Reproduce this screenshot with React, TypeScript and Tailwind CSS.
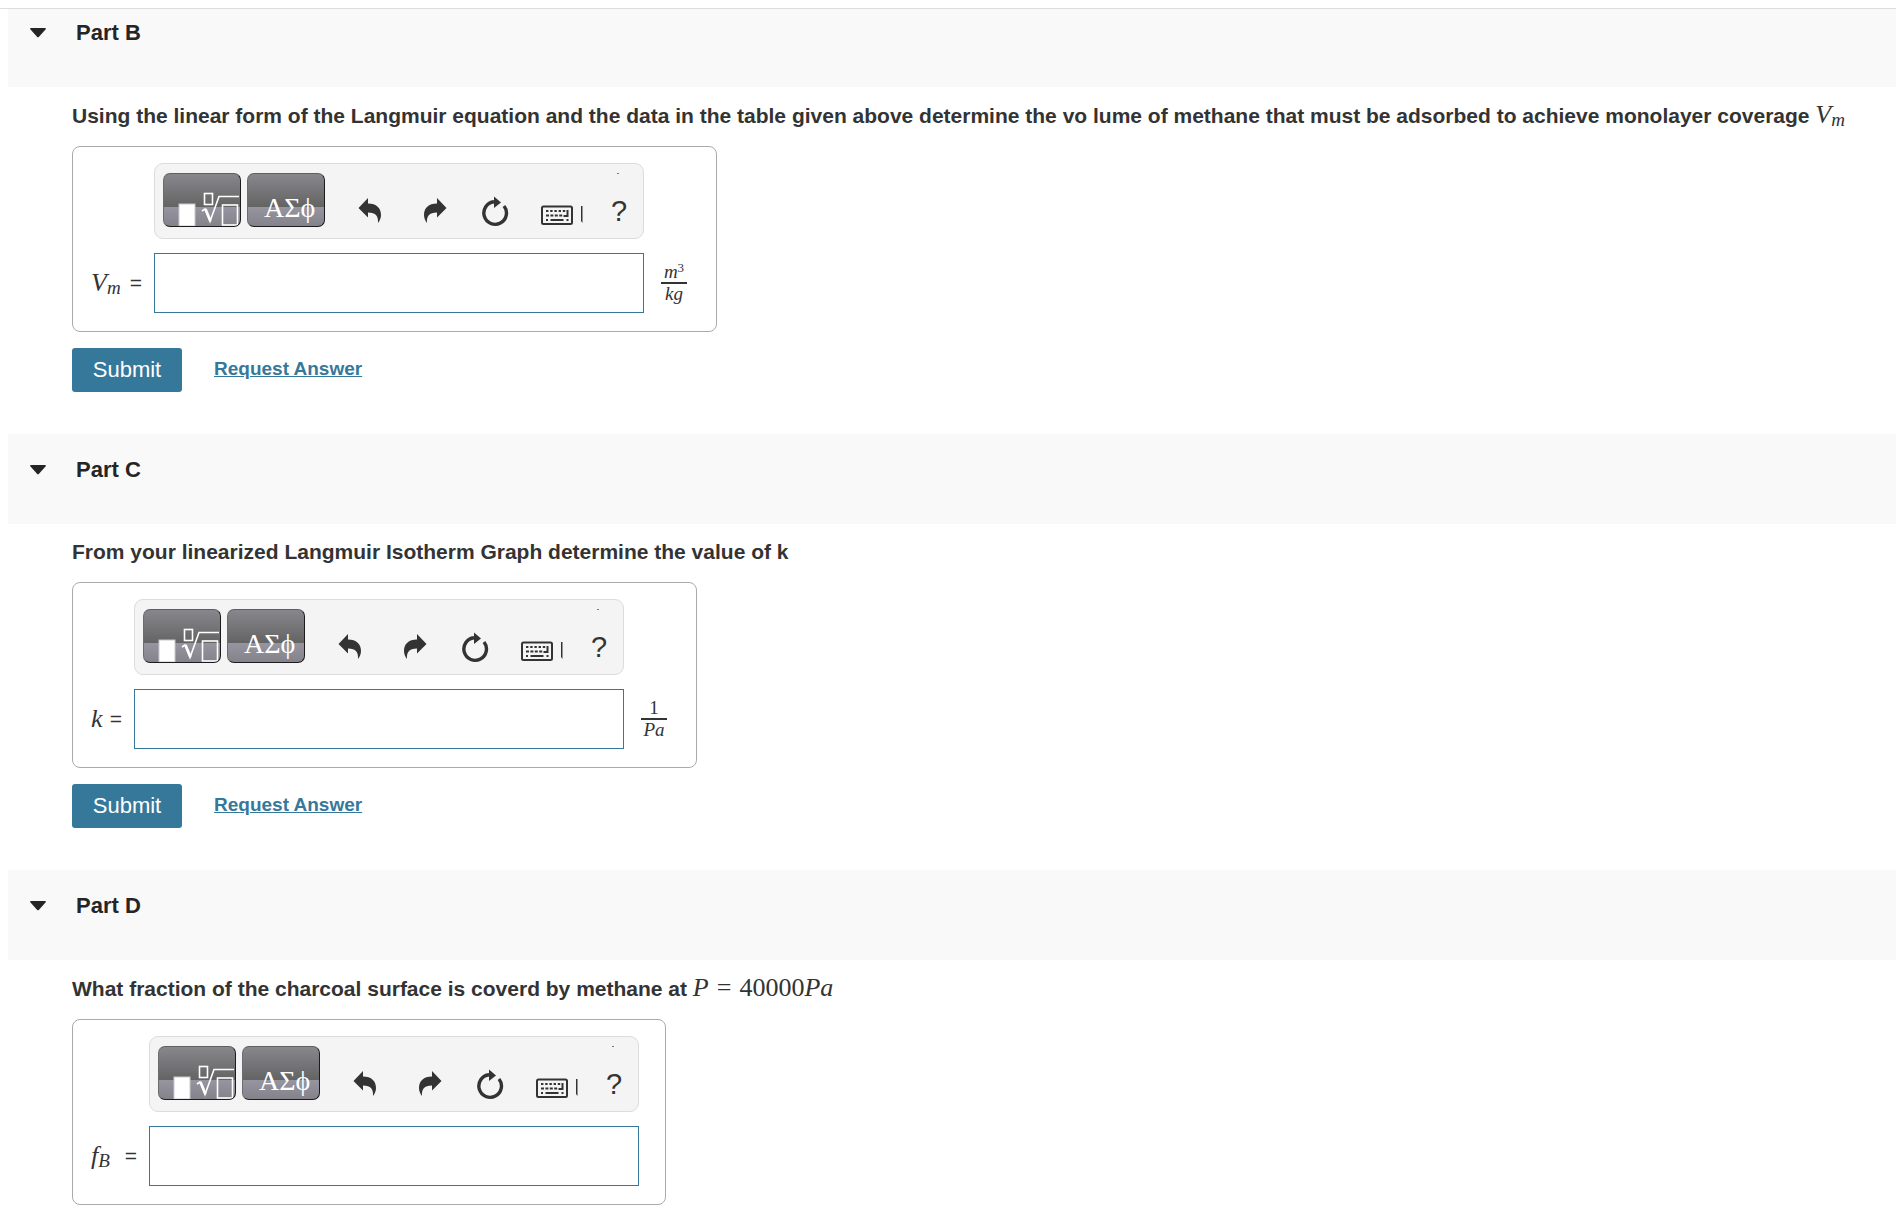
import { useId, useState, type ReactNode } from 'react';
import clsx from 'clsx';

const mathFont = "font-['Liberation_Serif',serif]";

function MathVar({ base, sub, className = '' }: { base: string; sub?: string; className?: string }) {
  return (
    <span className={clsx(mathFont, 'font-normal italic', className)}>
      {base}
      {sub && <span className="relative top-[3px] text-[19px] leading-none">{sub}</span>}
    </span>
  );
}

function TemplateButton({ label, children }: { label: string; children: ReactNode }) {
  return (
    <button
      type="button"
      aria-label={label}
      className="h-[54px] w-[78px] shrink-0 overflow-hidden rounded-[7px] border border-t-[#5f5f62] border-l-[#6c6c70] border-r-[#1c1c1e] border-b-[#1c1c1e] bg-[linear-gradient(to_bottom,#88878c_0%,#636363_64%,#9694a0_64%,#84838a_100%)]"
    >
      {children}
    </button>
  );
}

function IconButton({ label, width, className, children }: { label: string; width: number; className?: string; children: ReactNode }) {
  return (
    <button type="button" aria-label={label} className={clsx('shrink-0 text-[#333]', className)}>
      <svg width={width} height="54" viewBox={`0 0 ${width} 54`} fill="currentColor">
        {children}
      </svg>
    </button>
  );
}

function Toolbar() {
  return (
    <div className="flex h-[76px] items-start rounded-[9px] border border-[#dcdcdc] bg-[#f4f4f4] pt-[9px] pl-2">
      <TemplateButton label="Templates">
        <svg width="76" height="52" viewBox="0 0 76 52" fill="none" stroke="#fff">
          <rect x="15" y="30" width="16" height="22" fill="#fff" stroke="#c9c9cd" />
          <rect x="40.5" y="19.5" width="8" height="11" strokeWidth="1.6" />
          <path d="M38 37l3-2 5 12.5 9-25h20" strokeWidth="1.6" />
          <path d="M41.5 35l5 12" strokeWidth="2.6" />
          <rect x="58.5" y="31" width="15" height="20" strokeWidth="1.6" />
        </svg>
      </TemplateButton>
      <div className="ml-[6px] flex">
        <TemplateButton label="Symbols">
          <span className={clsx(mathFont, 'block pt-4 pl-4 text-left text-[28px] leading-[34px] text-white')}>ΑΣϕ</span>
        </TemplateButton>
      </div>
      <IconButton label="Undo" width={24} className="ml-[33px]">
        <path d="M0.5 35L10 25V30.5C18.5 30.5 23 35 23 42C23 45.5 21.5 48 20 50C20.5 43.5 18 39.5 10 39.5V44.5Z" />
      </IconButton>
      <IconButton label="Redo" width={24} className="ml-[41px]">
        <path d="M23.5 35L14 25V30.5C5.5 30.5 1 35 1 42C1 45.5 2.5 48 4 50C3.5 43.5 6 39.5 14 39.5V44.5Z" />
      </IconButton>
      <IconButton label="Reset" width={28} className="ml-[34px]">
        <path d="M23 33A11.3 11.3 0 1 1 13 28.8" fill="none" stroke="currentColor" strokeWidth="3.4" />
        <path d="M13 23.5L20 29.5L13 35Z" />
      </IconButton>
      <IconButton label="Keyboard shortcuts" width={42} className="ml-[32px]">
        <rect x="1" y="33.5" width="30" height="17.5" rx="1.5" fill="none" stroke="currentColor" strokeWidth="2" />
        <path d="M5 38h20" stroke="currentColor" strokeWidth="2" strokeDasharray="2.4 1.8" />
        <path d="M5 42.5h17" stroke="currentColor" strokeWidth="2" strokeDasharray="3 1.4" />
        <path d="M26.5 37v6h-4" fill="none" stroke="currentColor" strokeWidth="2" />
        <path d="M5 47h2M9.5 47h13M25.5 47h2" stroke="currentColor" strokeWidth="2" />
        <path d="M40 33h1.500v17l-1.500-2z" />
      </IconButton>
      <button
        type="button"
        aria-label="Help"
        className="relative ml-[28px] h-[54px] w-[16px] pt-[21px] text-center font-['Liberation_Sans',sans-serif] text-[29px] leading-[34px] text-[#333]"
      >
        ?
        <span className="absolute top-0 left-[6px] h-px w-[2px] bg-[#777]" />
      </button>
    </div>
  );
}

function Fraction({ top, bottom }: { top: ReactNode; bottom: ReactNode }) {
  return (
    <div className={clsx(mathFont, 'w-[26px] text-center text-[19px] leading-[20px] text-[#333]')}>
      <div className="border-b-2 border-[#333]">{top}</div>
      <div>{bottom}</div>
    </div>
  );
}

interface PartProps {
  title: string;
  question: ReactNode;
  variable: ReactNode;
  labelWidth: string;
  unit?: ReactNode;
  canSubmit?: boolean;
}

function Part({ title, question, variable, labelWidth, unit, canSubmit = true }: PartProps) {
  const inputId = useId();
  const [open, setOpen] = useState(true);
  const [answer, setAnswer] = useState('');

  return (
    <section className="pl-2">
      <h2 className="h-[90px] bg-[#f9f9f9] pt-[22px] pl-[22px]">
        <button
          type="button"
          aria-expanded={open}
          onClick={() => setOpen(!open)}
          className="flex items-center text-[22px] leading-[28px] font-bold text-[#252525]"
        >
          <svg width="16" height="10" viewBox="0 0 16 10" fill="currentColor" className="mr-[30px]">
            <path d="M1 0H15Q16.5 0.3 15.5 1.5L9 8.8Q8 9.8 7 8.8L0.5 1.5Q-0.5 0.3 1 0Z" />
          </svg>
          {title}
        </button>
      </h2>

      {open && (
        <form className="pl-16" onSubmit={e => e.preventDefault()}>
          <p className="pt-3 pb-[14px] text-[21px] leading-[32px] font-bold whitespace-nowrap text-[#333]">{question}</p>

          <div
            className={clsx(
              'flex w-fit rounded-[8px] border border-[#aaa] pt-4 pb-[18px] pl-[18px]',
              unit ? 'pr-[29px]' : 'pr-[26px]'
            )}
          >
            <label
              htmlFor={inputId}
              className={clsx(
                'flex h-[60px] items-center justify-between self-end pr-3 text-[21px] leading-[32px] text-[#333]',
                labelWidth
              )}
            >
              {variable}
              <span>=</span>
            </label>
            <div className="flex w-[490px] flex-col gap-[14px]">
              <Toolbar />
              <input
                id={inputId}
                type="text"
                value={answer}
                onChange={e => setAnswer(e.target.value)}
                className="h-[60px] w-full border border-[#36789a] bg-white px-3 text-[21px] outline-none"
              />
            </div>
            {unit && <div className="ml-[17px] flex h-[60px] items-center self-end">{unit}</div>}
          </div>

          {canSubmit && (
            <div className="flex items-start gap-8 pt-4 pb-[42px]">
              <button type="submit" className="h-[44px] w-[110px] rounded-[3px] bg-[#36789a] text-[22px] leading-[28px] text-white">
                Submit
              </button>
              <a href="#request-answer" className="pt-[9px] text-[19px] leading-[24px] font-bold text-[#36789a] underline">
                Request Answer
              </a>
            </div>
          )}
        </form>
      )}
    </section>
  );
}

export default function App() {
  return (
    <main className="h-screen overflow-hidden bg-white font-['Liberation_Sans',Arial,sans-serif]">
      <div className="h-[9px] border-b border-[#ddd]" />
      {/* the first header starts under the divider */}
      <div className="overflow-hidden">
        <div className="-mt-3">
          <Part
            title="Part B"
            labelWidth="w-[63px]"
            question={
              <>
                Using the linear form of the Langmuir equation and the data in the table given above determine the vo lume of methane that
                must be adsorbed to achieve monolayer coverage <MathVar base="V" sub="m" className="text-[26px]" />
              </>
            }
            variable={<MathVar base="V" sub="m" className="text-[26px]" />}
            unit={
              <Fraction
                top={
                  <>
                    <i>m</i>
                    <sup className="text-[13px] leading-none">3</sup>
                  </>
                }
                bottom={<i>kg</i>}
              />
            }
          />
          <Part
            title="Part C"
            labelWidth="w-[43px]"
            question="From your linearized Langmuir Isotherm Graph determine the value of k"
            variable={<MathVar base="k" className="text-[26px]" />}
            unit={<Fraction top="1" bottom={<i>Pa</i>} />}
          />
          <Part
            title="Part D"
            labelWidth="w-[58px]"
            question={
              <>
                What fraction of the charcoal surface is coverd by methane at{' '}
                <span className={clsx(mathFont, 'text-[26px] font-normal')}>
                  <i>P</i>
                  <span className="mx-2">=</span>
                  40000<i>Pa</i>
                </span>
              </>
            }
            variable={<MathVar base="f" sub="B" className="text-[26px]" />}
            canSubmit={false}
          />
        </div>
      </div>
    </main>
  );
}
